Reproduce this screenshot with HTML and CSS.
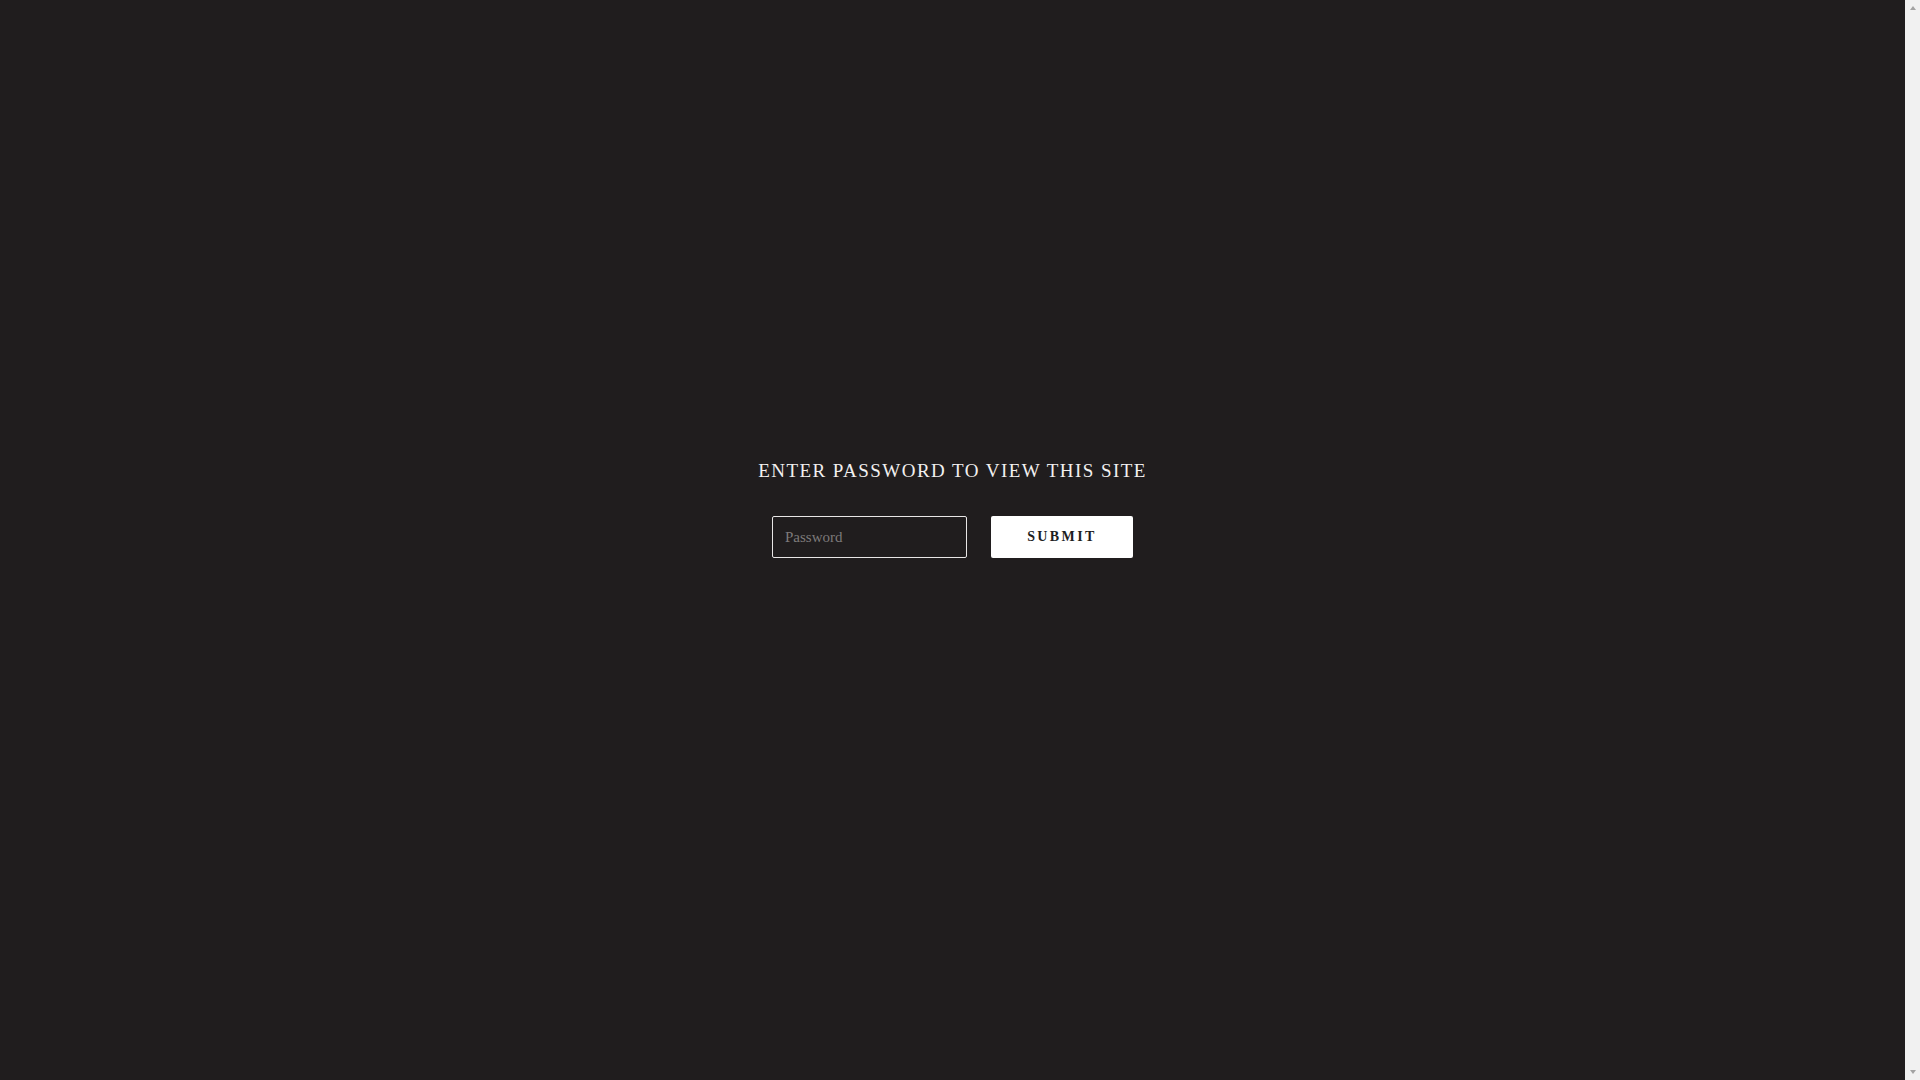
FILE: index.html
```html
<!DOCTYPE html>
<html lang="en">
<head>
<meta charset="utf-8">
<title>Password</title>
<link rel="stylesheet" href="styles.css">
</head>
<body>
<main class="page">
  <div class="gate">
    <h2 class="gate-title">ENTER PASSWORD TO VIEW THIS SITE</h2>
    <form class="gate-form" onsubmit="return false;">
      <input class="gate-input" type="password" placeholder="Password">
      <button class="gate-button" type="submit">SUBMIT</button>
    </form>
  </div>
</main>
<div class="scrollbar" aria-hidden="true">
  <span class="arrow arrow-up"></span>
  <span class="arrow arrow-down"></span>
</div>
</body>
</html>
```

FILE: styles.css
```css
html {
  background: #201d1e;
}
body {
  margin: 0;
  height: 100vh;
  display: flex;
  overflow: hidden;
  background: #201d1e;
  font-family: "Liberation Serif", "Times New Roman", serif;
}
.page {
  flex: 1;
  display: flex;
  align-items: center;
  justify-content: center;
  padding: 8px 0 74px;
  box-sizing: border-box;
}
.gate {
  display: flex;
  flex-direction: column;
  align-items: center;
}
.gate-title {
  margin: 0 0 30px;
  font-size: 19px;
  line-height: 30px;
  font-weight: normal;
  letter-spacing: 1.45px;
  color: #f2f0f0;
}
.gate-form {
  display: flex;
  gap: 24px;
  margin: 0;
}
.gate-input {
  box-sizing: border-box;
  width: 195px;
  height: 42px;
  padding: 0 12px;
  border: 1px solid #e8e6e6;
  border-radius: 2px;
  background: transparent;
  color: #fff;
  font-family: "Liberation Serif", "Times New Roman", serif;
  font-size: 15px;
  outline: none;
}
.gate-input::placeholder {
  color: #7d7a7a;
}
.gate-button {
  box-sizing: border-box;
  width: 142px;
  height: 42px;
  border: none;
  border-radius: 2px;
  background: #ffffff;
  color: #201d1e;
  font-family: "Liberation Serif", "Times New Roman", serif;
  font-size: 14px;
  font-weight: bold;
  letter-spacing: 2.4px;
  padding: 0;
  cursor: pointer;
}
.scrollbar {
  width: 15px;
  flex: none;
  background: #f1f1f1;
  display: flex;
  flex-direction: column;
  justify-content: space-between;
  align-items: center;
  padding: 6px 0;
  box-sizing: border-box;
}
.arrow {
  width: 0;
  height: 0;
  border-left: 3.5px solid transparent;
  border-right: 3.5px solid transparent;
}
.arrow-up {
  border-bottom: 4px solid #a3a3a3;
}
.arrow-down {
  border-top: 4px solid #a3a3a3;
}
```
